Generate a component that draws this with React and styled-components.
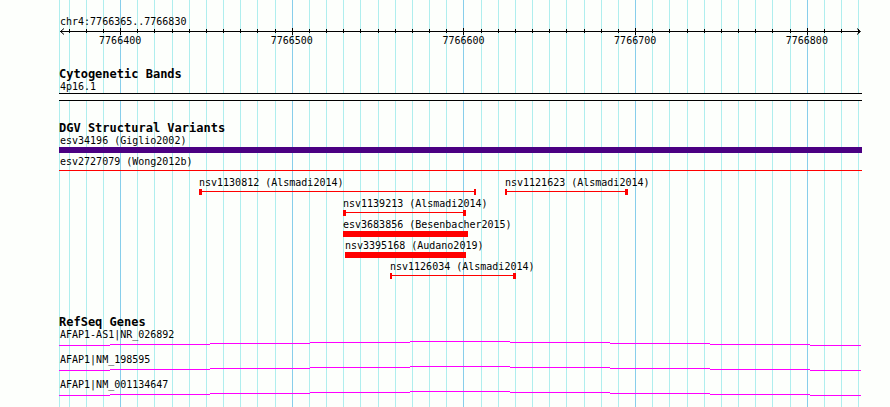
import React from "react";
import styled, { createGlobalStyle } from "styled-components";

const START = 7766365;
const END = 7766831;
// feature, label and arc positions are given on an 800 unit wide map
const MAP_UNITS = 800;

const bpToPercent = (bp) => `${((bp - START) / (END - START)) * 100}%`;
const unitsToPercent = (units) => `${(units / MAP_UNITS) * 100}%`;

const ticks = [];
for (let bp = 7766370; bp <= 7766830; bp += 10) {
  ticks.push({ bp, major: bp % 100 === 0 });
}

const variantLanes = [
  [
    { name: "nsv1130812 (Alsmadi2014)", from: 139, to: 416, caps: [3, 2] },
    { name: "nsv1121623 (Alsmadi2014)", from: 445, to: 568, caps: [2, 3] },
  ],
  [{ name: "nsv1139213 (Alsmadi2014)", from: 283, to: 406, caps: [3, 3] }],
  [{ name: "esv3683856 (Besenbacher2015)", from: 283, to: 408 }],
  [{ name: "nsv3395168 (Audano2019)", from: 285, to: 406 }],
  [{ name: "nsv1126034 (Alsmadi2014)", from: 330, to: 456, caps: [2, 3] }],
];

const genes = ["AFAP1-AS1|NR_026892", "AFAP1|NM_198595", "AFAP1|NM_001134647"];

// x, width and height level of every step in an intron line
const intronSteps = [
  [0, 51, 4],
  [51, 100, 3],
  [151, 100, 2],
  [251, 100, 1],
  [351, 100, 0],
  [451, 100, 1],
  [551, 100, 2],
  [651, 100, 3],
  [751, 51, 4],
];

const GlobalStyle = createGlobalStyle`
  body {
    margin: 0;
    background: #fdfffc;
    color: #000;
    font-family: "DejaVu Sans Mono", "Liberation Mono", monospace;
    font-size: 10px;
    line-height: 12px;
  }
`;

const Panel = styled.main`
  position: relative;
  box-sizing: border-box;
  min-height: 100vh;
  margin: 0 30px 0 60px;
  padding-top: 16px;
`;

const Grid = styled.svg`
  position: absolute;
  inset: 0;
  z-index: -1;
  width: 100%;
  height: 100%;
  overflow: visible;
`;

const Ruler = styled.header`
  margin-bottom: 20px;
`;

const Axis = styled.svg`
  display: block;
  width: 100%;
  height: 7px;
  overflow: visible;
`;

const Lane = styled.div`
  display: grid;
  grid-template-columns: 100%;
  margin-bottom: 3px;

  & > * {
    grid-area: 1 / 1;
  }
`;

const Label = styled.div`
  height: 12px;
  white-space: nowrap;
`;

const TickLabel = styled(Label)`
  width: 42px;
  margin-left: ${(props) => `calc(${props.$at} - 21px)`};
  text-align: center;
`;

const Track = styled.section`
  margin-bottom: ${(props) => props.$gap || 0}px;
`;

const TrackTitle = styled.h2`
  margin: 0 0 0 -1px;
  font-size: 12px;
  line-height: 14px;
  font-weight: bold;
`;

const Feature = styled.div`
  margin-left: ${(props) => props.$left};
`;

const FullFeature = styled.div`
  margin-bottom: 3px;
`;

const Band = styled.div`
  box-sizing: border-box;
  height: 8px;
  margin: 0 -2px 0 -1px;
  border: solid #000;
  border-width: 1px 0;
  background: #fdfffc;
`;

const FullBar = styled.div`
  height: 6px;
  margin: 0 -2px 0 -1px;
  background: #4b0082;
`;

const FullLine = styled.div`
  height: 1px;
  margin: 0 -2px 0 -1px;
  padding: 2px 0 3px;
  background: #f00 content-box;
`;

const Bar = styled.div`
  width: ${(props) => props.$width};
  height: 6px;
  background: #f00;
`;

const Span = styled.div`
  box-sizing: border-box;
  width: ${(props) => props.$width};
  height: 6px;
  border: solid #f00;
  border-width: 0 ${(props) => props.$caps[1]}px 0 ${(props) => props.$caps[0]}px;
  background: linear-gradient(#f00, #f00) 0 2px / 100% 1px no-repeat;
`;

const Gene = styled.div`
  margin-bottom: 8px;
`;

const IntronLine = styled.svg`
  display: block;
  width: calc(100% + 2px);
  height: 5px;
  margin-left: -1px;
`;

function GridLines() {
  return (
    <Grid shapeRendering="crispEdges" aria-hidden="true">
      <rect x="-1" y="0" width="1" height="100%" fill="#afeeee" />
      {ticks.map(({ bp, major }) => (
        <rect
          key={bp}
          x={bpToPercent(bp)}
          y="0"
          width="1"
          height="100%"
          fill={major ? "#87ceeb" : "#afeeee"}
        />
      ))}
    </Grid>
  );
}

function Scale() {
  return (
    <Ruler>
      <Label>chr4:7766365..7766830</Label>
      <Axis aria-hidden="true">
        <rect x="0" y="3" width="100%" height="1" shapeRendering="crispEdges" />
        {ticks.map(({ bp, major }) => (
          <rect
            key={bp}
            x={bpToPercent(bp)}
            y={major ? 0 : 1}
            width="1"
            height={major ? 7 : 4}
            shapeRendering="crispEdges"
          />
        ))}
        <path d="M4 0.5 L0.5 3.5 L4 6.5" fill="none" stroke="#000" />
        <svg x="100%" overflow="visible">
          <path d="M-3 0.5 L0.5 3.5 L-3 6.5" fill="none" stroke="#000" />
        </svg>
      </Axis>
      <Lane>
        {ticks
          .filter((tick) => tick.major)
          .map(({ bp }) => (
            <TickLabel key={bp} $at={bpToPercent(bp)}>
              {bp}
            </TickLabel>
          ))}
      </Lane>
    </Ruler>
  );
}

function Variant({ name, from, to, caps }) {
  // the glyph width is relative to what is left of the lane
  const width = `${((to - from) / (MAP_UNITS - from)) * 100}%`;
  return (
    <Feature $left={unitsToPercent(from)}>
      <Label>{name}</Label>
      {caps ? <Span $width={width} $caps={caps} /> : <Bar $width={width} />}
    </Feature>
  );
}

export default function App() {
  return (
    <>
      <GlobalStyle />
      <Panel>
        <GridLines />
        <Scale />
        <Track $gap={20}>
          <TrackTitle>Cytogenetic Bands</TrackTitle>
          <Label>4p16.1</Label>
          <Band />
        </Track>
        <Track $gap={36}>
          <TrackTitle>DGV Structural Variants</TrackTitle>
          <FullFeature>
            <Label>esv34196 (Giglio2002)</Label>
            <FullBar />
          </FullFeature>
          <FullFeature>
            <Label>esv2727079 (Wong2012b)</Label>
            <FullLine />
          </FullFeature>
          {variantLanes.map((lane) => (
            <Lane key={lane[0].name}>
              {lane.map((variant) => (
                <Variant key={variant.name} {...variant} />
              ))}
            </Lane>
          ))}
        </Track>
        <Track>
          <TrackTitle>RefSeq Genes</TrackTitle>
          {genes.map((gene) => (
            <Gene key={gene}>
              <Label>{gene}</Label>
              <IntronLine
                viewBox="0 0 802 5"
                preserveAspectRatio="none"
                shapeRendering="crispEdges"
                aria-hidden="true"
              >
                {intronSteps.map(([x, width, y]) => (
                  <rect key={x} x={x} y={y} width={width} height="1" fill="#f0f" />
                ))}
              </IntronLine>
            </Gene>
          ))}
        </Track>
      </Panel>
    </>
  );
}
